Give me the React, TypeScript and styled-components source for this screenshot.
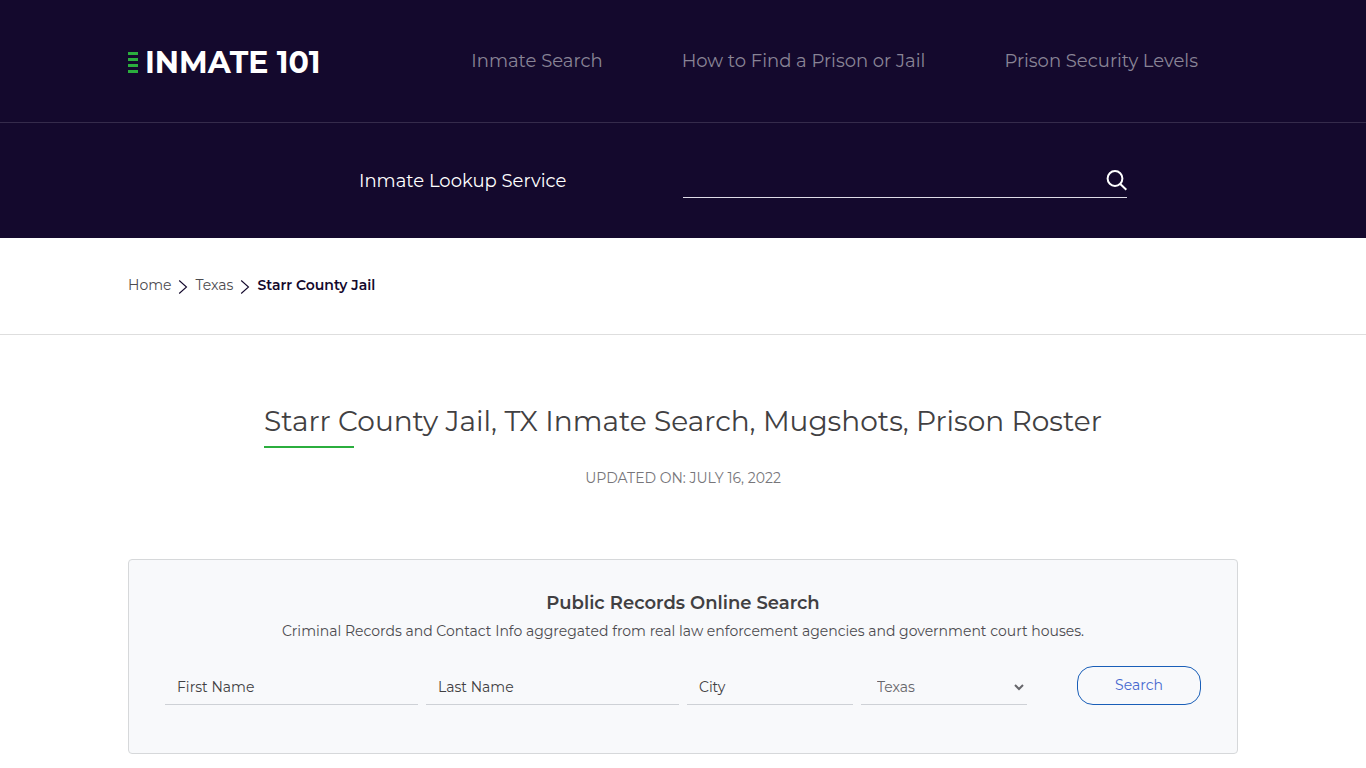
import React from 'react';
import styled, { createGlobalStyle } from 'styled-components';

const GlobalStyle = createGlobalStyle`
  *, *::before, *::after { box-sizing: border-box; }
  body {
    margin: 0;
    background: #fff;
    color: #414042;
    font-family: Montserrat, Inter, sans-serif;
    font-size: 14px;
    line-height: 24px;
  }
  input, select, button { font: inherit; }
`;

const Container = styled.div`
  width: 100%;
  max-width: 1140px;
  margin: 0 auto;
  padding: 0 15px;
`;

const Header = styled.header`
  background: #14092d;
  color: #fff;
`;

const TopBar = styled.div`
  border-bottom: 1px solid #352b4b;
`;

const TopBarInner = styled(Container)`
  display: flex;
  align-items: center;
  justify-content: space-between;
  min-height: 122px;
`;

const Logo = styled.a`
  display: flex;
  align-items: center;
  gap: 7px;
  padding-top: 3px;
  color: #fff;
  font-size: 30px;
  font-weight: 700;
  line-height: 40px;
  text-decoration: none;
  white-space: nowrap;
`;

const Nav = styled.nav`
  display: flex;
  gap: 79px;
  padding-right: 40px;
`;

const NavLink = styled.a`
  color: #898496;
  font-size: 18px;
  font-weight: 400;
  text-decoration: none;
  white-space: nowrap;
`;

const Lookup = styled.form`
  display: grid;
  grid-template-columns: 204px minmax(0, 444px);
  justify-content: center;
  align-items: center;
  column-gap: 120px;
  padding: 40px 15px;
  margin-left: 120px;
`;

const LookupLabel = styled.label`
  font-size: 18px;
  font-weight: 400;
  white-space: nowrap;
`;

const LookupField = styled.div`
  display: flex;
  align-items: center;
  height: 35px;
  border-bottom: 1px solid #dedbe6;
`;

const LookupInput = styled.input`
  flex: 1;
  min-width: 0;
  border: 0;
  outline: 0;
  background: transparent;
  color: #fff;
`;

const IconButton = styled.button`
  display: flex;
  padding: 0;
  border: 0;
  background: transparent;
  color: #fff;
  cursor: pointer;
`;

const BreadcrumbBar = styled.nav`
  border-bottom: 1px solid #dedede;
`;

const Breadcrumbs = styled.ol`
  display: flex;
  align-items: center;
  gap: 7px;
  margin: 0;
  padding: 35px 0 37px;
  list-style: none;
`;

const Crumb = styled.li`
  display: flex;
  align-items: center;
  gap: 7px;
  color: #14092d;

  a { color: #4c4b4f; text-decoration: none; }
  svg { margin-top: 4px; }
`;

const CurrentCrumb = styled(Crumb)`
  font-weight: 600;
`;

const TitleBlock = styled.div`
  display: flex;
  flex-direction: column;
  align-items: center;
  padding: 66px 0 69px;
`;

const Title = styled.h1`
  margin: 0 0 18px;
  font-size: 28px;
  font-weight: 400;
  line-height: 40px;

  &::after {
    content: '';
    display: block;
    width: 90px;
    height: 2px;
    margin-top: 5px;
    background: #2bae3e;
  }
`;

const Updated = styled.p`
  margin: 0;
  color: #77767a;
  text-transform: uppercase;
`;

const Card = styled.section`
  padding: 31px 36px 48px;
  border: 1px solid #d6d8da;
  border-radius: 4px;
  background: #f8f9fb;
  text-align: center;
`;

const CardTitle = styled.h2`
  margin: 0 0 4px;
  font-size: 18px;
  font-weight: 600;
  line-height: 24px;
`;

const CardText = styled.p`
  margin: 0 0 23px;
  color: #4c4b4f;
`;

const RecordsForm = styled.form`
  display: flex;
  gap: 50px;
`;

const Fields = styled.div`
  flex: 1;
  display: grid;
  grid-template-columns: 253fr 253fr 166fr 166fr;
  align-items: end;
  gap: 8px;
`;

const TextInput = styled.input`
  width: 100%;
  min-width: 0;
  height: 36px;
  padding: 0 12px;
  border: 0;
  border-bottom: 1px solid #ced1d6;
  border-radius: 0;
  outline: 0;
  background: transparent;
  color: #414042;

  &::placeholder { color: #414042; opacity: 1; }
`;

const StateSelect = styled.select`
  width: 100%;
  min-width: 0;
  height: 36px;
  padding: 0 0 0 12px;
  border: 0;
  border-bottom: 1px solid #ced1d6;
  border-radius: 0;
  outline: 0;
  background: transparent;
  color: #66666a;
`;

const SearchButton = styled.button`
  width: 124px;
  height: 39px;
  padding: 0 0 2px;
  border: 1px solid #1a5fb8;
  border-radius: 16px;
  background: transparent;
  color: #4668cf;
  cursor: pointer;
`;

const LogoBars = () => (
  <svg width="10" height="22" viewBox="0 0 10 22" aria-hidden="true">
    <path d="M0 0h10v3H0zM0 6h10v3H0zM0 12h10v3H0zM0 18h10v3H0z" fill="#2bae3e" />
  </svg>
);

const SearchIcon = () => (
  <svg width="21" height="21" viewBox="0 0 21 21" fill="none" stroke="currentColor" strokeWidth="2" aria-hidden="true">
    <circle cx="9" cy="8.5" r="7.4" />
    <path d="M14.3 14l6 5.8" />
  </svg>
);

const Chevron = () => (
  <svg width="10" height="16" viewBox="0 0 10 16" fill="none" stroke="#14092d" strokeWidth="1.1" aria-hidden="true">
    <path d="M1.2 1.5l7.3 6.5-7.3 6.5" />
  </svg>
);

export default function App() {
  const stop = (event: React.FormEvent) => event.preventDefault();

  return (
    <>
      <GlobalStyle />
      <Header>
        <TopBar>
          <TopBarInner>
            <Logo href="#"><LogoBars /><span>INMATE 101</span></Logo>
            <Nav>
              <NavLink href="#">Inmate Search</NavLink>
              <NavLink href="#">How to Find a Prison or Jail</NavLink>
              <NavLink href="#">Prison Security Levels</NavLink>
            </Nav>
          </TopBarInner>
        </TopBar>
        <Lookup onSubmit={stop}>
          <LookupLabel htmlFor="lookup">Inmate Lookup Service</LookupLabel>
          <LookupField>
            <LookupInput id="lookup" type="text" />
            <IconButton type="submit" aria-label="Search"><SearchIcon /></IconButton>
          </LookupField>
        </Lookup>
      </Header>
      <BreadcrumbBar aria-label="Breadcrumb">
        <Container>
          <Breadcrumbs>
            <Crumb><a href="#">Home</a><Chevron /></Crumb>
            <Crumb><a href="#">Texas</a><Chevron /></Crumb>
            <CurrentCrumb aria-current="page">Starr County Jail</CurrentCrumb>
          </Breadcrumbs>
        </Container>
      </BreadcrumbBar>
      <Container as="main">
        <TitleBlock>
          <Title>Starr County Jail, TX Inmate Search, Mugshots, Prison Roster</Title>
          <Updated>Updated on: July 16, 2022</Updated>
        </TitleBlock>
        <Card>
          <CardTitle>Public Records Online Search</CardTitle>
          <CardText>
            Criminal Records and Contact Info aggregated from real law enforcement agencies and government court houses.
          </CardText>
          <RecordsForm onSubmit={stop}>
            <Fields>
              <TextInput type="text" placeholder="First Name" aria-label="First Name" />
              <TextInput type="text" placeholder="Last Name" aria-label="Last Name" />
              <TextInput type="text" placeholder="City" aria-label="City" />
              <StateSelect aria-label="State" defaultValue="Texas">
                <option>Texas</option>
              </StateSelect>
            </Fields>
            <SearchButton type="submit">Search</SearchButton>
          </RecordsForm>
        </Card>
      </Container>
    </>
  );
}
